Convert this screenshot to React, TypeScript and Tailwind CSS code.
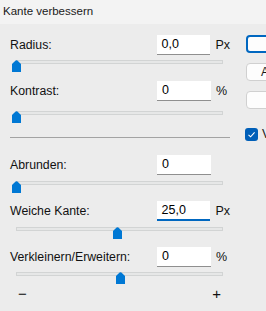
import type { ReactNode } from 'react';

const LABEL_FONT = { fontFamily: '"Liberation Sans", Arial, sans-serif' };

function Thumb() {
  return (
    <svg width="9" height="12" viewBox="0 0 9 12" className="block">
      <path d="M0 12 V4 L3.6 0.6 Q4.5 -0.1 5.4 0.6 L9 4 V12 Z" fill="#0078d4" />
    </svg>
  );
}

function Slider({ left, className = '' }: { left: number; className?: string }) {
  return (
    <div className={`relative h-[12px] w-[220px] ${className}`}>
      <div className="ml-[6px] mt-[5px] h-[4px] w-[207px] border border-[#d2d4d4] bg-[#e6e7e7]" />
      <div className="absolute top-0" style={{ left: left - 10 }}>
        <Thumb />
      </div>
    </div>
  );
}

function Field({
  label,
  value,
  unit,
  focused = false,
  className = '',
}: {
  label: string;
  value: string;
  unit?: string;
  focused?: boolean;
  className?: string;
}) {
  return (
    <div className={`flex h-[20px] items-center ${className}`}>
      <span className="w-[147px] text-[12.3px] text-[#111]">{label}</span>
      <div
        className={`flex h-[20px] w-[54px] items-center bg-white pl-[5px] text-[12.5px] text-black ${
          focused ? 'border-b-2 border-[#0067c0]' : 'border-b border-[#8f8f8f]'
        }`}
      >
        {value}
      </div>
      {unit && <span className="ml-[5px] text-[12.5px] text-[#111]">{unit}</span>}
    </div>
  );
}

function SideButton({ children, primary = false }: { children: ReactNode; primary?: boolean }) {
  return (
    <button
      type="button"
      className={`flex h-[18px] w-[88px] items-center justify-center rounded-[4px] bg-[#fdfdfd] text-[12px] text-[#1a1a1a] ${
        primary ? 'border-2 border-[#0067c0]' : 'border border-[#d0d0d0]'
      }`}
    >
      {children}
    </button>
  );
}

export default function App() {
  return (
    <div className="h-[311px] w-[266px] overflow-hidden bg-[#ececec]" style={LABEL_FONT}>
      <div className="flex h-[24px] items-center bg-[#f3f3f3] pl-[3px] text-[11.5px] text-[#1a1a1a]">
        Kante verbessern
      </div>

      <div className="flex">
        <div className="w-[220px] shrink-0 pl-[10px] box-content">
          <Field label="Radius:" value="0,0" unit="Px" className="mt-[11px]" />
          <Slider left={12} className="mt-[5px]" />
          <Field label="Kontrast:" value="0" unit="%" className="mt-[9px]" />
          <Slider left={12} className="mt-[10px]" />
          <div className="mt-[14px] h-px w-[220px] bg-[#a3a3a3]" />
          <Field label="Abrunden:" value="0" className="mt-[17px]" />
          <Slider left={12} className="mt-[6px]" />
          <Field label="Weiche Kante:" value="25,0" unit="Px" focused className="mt-[8px]" />
          <Slider left={113} className="mt-[6px]" />
          <Field label="Verkleinern/Erweitern:" value="0" unit="%" className="mt-[8px]" />
          <Slider left={116} className="mt-[5px]" />
          <div className="mt-[1px] flex h-[16px] w-[211px] items-center justify-between pl-[8px] text-[15px] leading-none text-[#111]">
            <span>−</span>
            <span>+</span>
          </div>
        </div>

        <div className="ml-[16px] flex flex-col">
          <div className="mt-[11px]">
            <SideButton primary>OK</SideButton>
          </div>
          <div className="mt-[10px]">
            <SideButton>Abbrechen</SideButton>
          </div>
          <div className="mt-[10px]">
            <SideButton>Hilfe</SideButton>
          </div>
          <div className="ml-[-1px] mt-[16px] flex items-center gap-[4px]">
            <span className="flex h-[13px] w-[13px] items-center justify-center rounded-[3px] bg-[#005fb8]">
              <svg width="9" height="9" viewBox="0 0 9 9">
                <path d="M1.5 4.8 L3.6 6.8 L7.6 2.3" fill="none" stroke="white" strokeWidth="1.1" />
              </svg>
            </span>
            <span className="text-[12.3px] text-[#1a1a1a]">Vorschau</span>
          </div>
        </div>
      </div>
    </div>
  );
}
